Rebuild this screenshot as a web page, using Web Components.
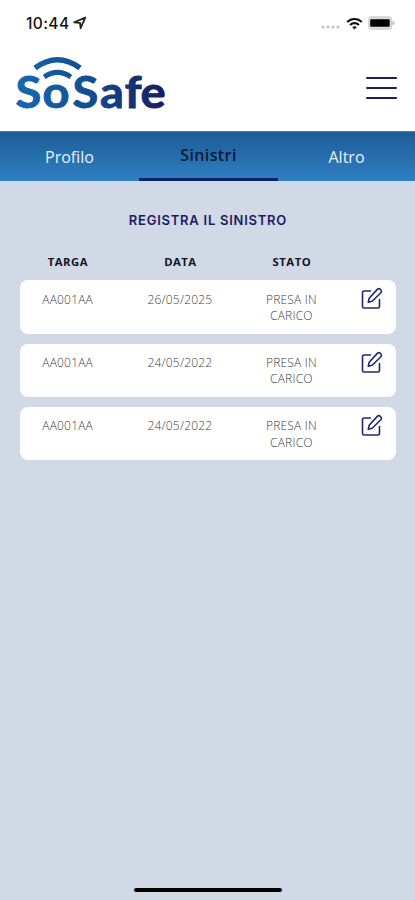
<!DOCTYPE html>
<html lang="it">
<head>
<meta charset="utf-8">
<meta name="viewport" content="width=device-width, initial-scale=1">
<title>SoSafe</title>
<style>
  :root {
    --navy: #1b1c63;
    --page: #d1d8e6;
    --ink: #111522;
  }
  body {
    margin: 0;
    background: var(--page);
    font-family: "Open Sans", "Noto Sans", sans-serif;
  }
</style>
</head>
<body>
<so-app>
  <so-status-bar slot="top" time="10:44"></so-status-bar>
  <so-header slot="top"></so-header>
  <so-tabs slot="top">
    <so-tab>Profilo</so-tab>
    <so-tab active>Sinistri</so-tab>
    <so-tab>Altro</so-tab>
  </so-tabs>
  <so-claims heading="REGISTRA IL SINISTRO">
    <so-claim targa="AA001AA" data="26/05/2025">PRESA IN CARICO</so-claim>
    <so-claim targa="AA001AA" data="24/05/2022">PRESA IN CARICO</so-claim>
    <so-claim targa="AA001AA" data="24/05/2022">PRESA IN CARICO</so-claim>
  </so-claims>
</so-app>

<script>
/* Shared base: renders template() into an open shadow root */
class SoElement extends HTMLElement {
  constructor() {
    super();
    this.attachShadow({ mode: 'open' });
  }

  connectedCallback() {
    this.shadowRoot.innerHTML = this.template();
  }
}

/* <so-app> — full-height column with the home indicator at the bottom */
class SoApp extends SoElement {
  template() {
    return `
      <style>
        :host {
          display: flex;
          flex-direction: column;
          height: 900px;
          overflow: hidden;
        }
        main { flex: 1; }
        .home {
          width: 148px;
          height: 4px;
          margin: 0 auto 8px;
          border-radius: 2px;
          background: #000;
        }
      </style>
      <slot name="top"></slot>
      <main><slot></slot></main>
      <div class="home"></div>
    `;
  }
}

/* <so-status-bar time="10:44"> */
class SoStatusBar extends SoElement {
  template() {
    return `
      <style>
        :host {
          display: flex;
          align-items: center;
          justify-content: space-between;
          box-sizing: border-box;
          height: 46px;
          padding: 0 20px 0 26px;
          background: #fff;
          color: #111;
        }
        .group { display: flex; align-items: center; }
        .time {
          padding-top: 1px;
          font: 500 15.5px/20px Inter, sans-serif;
          letter-spacing: 0.4px;
        }
        svg { display: block; }
        .arrow { margin-left: 4px; }
        .dots { margin: 8px 6px 0 0; }
        .battery { margin-left: 5px; }
      </style>
      <div class="group">
        <span class="time">${this.getAttribute('time')}</span>
        <svg class="arrow" width="14" height="14" viewBox="0 0 14 14">
          <path d="M1.2 6.3 12.3 1.5 7.6 12.2 7 6.9Z" fill="none" stroke="#222" stroke-width="1.8" stroke-linejoin="round"/>
        </svg>
      </div>
      <div class="group">
        <svg class="dots" width="19" height="4" viewBox="0 0 19 4" fill="#c4c4c4">
          <circle cx="2" cy="2" r="1.6"/><circle cx="7" cy="2" r="1.6"/>
          <circle cx="12" cy="2" r="1.6"/><circle cx="17" cy="2" r="1.6"/>
        </svg>
        <svg width="17" height="13" viewBox="0 0 17 13" fill="none" stroke="#111" stroke-width="2.1">
          <path d="M1.2 5C5.2.9 11.8.9 15.8 5"/>
          <path d="M4.1 7.9C6.5 5.5 10.5 5.5 12.9 7.9"/>
          <path d="M8.5 12.4 6.2 10.1Q8.5 8.2 10.8 10.1Z" fill="#111" stroke="none"/>
        </svg>
        <svg class="battery" width="27" height="14" viewBox="0 0 27 14">
          <rect x=".9" y=".9" width="22.4" height="12.2" rx="2.5" fill="#ddd" stroke="#cfcfcf" stroke-width="1.4"/>
          <rect x="2.2" y="3.2" width="19.5" height="7.6" rx="1" fill="#000"/>
          <path d="M24.5 4.5Q26.5 5.5 26.5 7T24.5 9.5Z" fill="#b5b5b5"/>
        </svg>
      </div>
    `;
  }
}

/* <so-header> — logo and menu button */
class SoHeader extends SoElement {
  template() {
    return `
      <style>
        :host {
          display: flex;
          justify-content: space-between;
          box-sizing: border-box;
          height: 85px;
          padding: 0 18px 0 6px;
          background: #fff;
        }
        svg { display: block; overflow: visible; }
        text { font: 700 43.5px Lato, sans-serif; }
        button {
          display: flex;
          flex-direction: column;
          align-self: flex-start;
          gap: 8px;
          margin-top: 31px;
          padding: 0;
          border: 0;
          background: none;
        }
        i {
          width: 31px;
          height: 2px;
          border-radius: 1px;
          background: var(--navy);
        }
      </style>
      <svg width="190" height="84" viewBox="6 46 190 84" role="img" aria-label="SoSafe">
        <defs>
          <linearGradient id="brand" gradientUnits="userSpaceOnUse" x1="16" y1="0" x2="158" y2="0">
            <stop offset="0" stop-color="#1668ae"/>
            <stop offset=".45" stop-color="#124f94"/>
            <stop offset="1" stop-color="#151a5c"/>
          </linearGradient>
        </defs>
        <g fill="none" stroke="url(#brand)">
          <path d="M35 68Q57.500 51.500 80 68" stroke-width="5.600"/>
          <path d="M44.200 77Q57.500 67.800 70.800 77" stroke-width="5"/>
        </g>
        <text transform="scale(1.08 1)" x="14.400 39.300 67.200 92.700 115.600 130" y="108" fill="url(#brand)" stroke="url(#brand)" stroke-width=".9">SoSafe</text>
      </svg>
      <button aria-label="Menu"><i></i><i></i><i></i></button>
    `;
  }
}

/* <so-tabs> — blue bar, equal-width <so-tab> children */
class SoTabs extends SoElement {
  template() {
    return `
      <style>
        :host {
          display: grid;
          grid-template-columns: 139px 139px 137px;
          box-sizing: border-box;
          height: 50px;
          border-top: 1px solid #477da6;
          background: linear-gradient(#1d5c98, #2f80c3);
        }
      </style>
      <slot></slot>
    `;
  }
}

class SoTab extends SoElement {
  template() {
    return `
      <style>
        :host {
          display: flex;
          align-items: center;
          justify-content: center;
          box-sizing: border-box;
          color: #e9f2fb;
          font-size: 16px;
        }
        :host([active]) {
          border-bottom: 3px solid #0b2268;
          color: #0c1a33;
          font-weight: 600;
          letter-spacing: 0.4px;
        }
      </style>
      <span><slot></slot></span>
    `;
  }
}

/* <so-claims heading="…"> — heading, column names, list of <so-claim> */
class SoClaims extends SoElement {
  template() {
    return `
      <style>
        :host { display: block; padding: 29px 19.5px 0 20.4px; }
        h1 {
          margin: 0;
          color: var(--navy);
          font: 600 13px/20px Inter, sans-serif;
          letter-spacing: 0.75px;
          text-align: center;
        }
        .names {
          display: grid;
          grid-template-columns: 95px 130px 93px 1fr;
          margin: 23px 0 10.3px;
          color: var(--ink);
          font-size: 11.3px;
          font-weight: 700;
          line-height: 17px;
          letter-spacing: 0.5px;
          text-align: center;
        }
        .list { display: flex; flex-direction: column; gap: 9.7px; }
      </style>
      <h1>${this.getAttribute('heading')}</h1>
      <div class="names"><span>TARGA</span><span>DATA</span><span>STATO</span></div>
      <div class="list"><slot></slot></div>
    `;
  }
}

/* <so-claim targa="…" data="…">status</so-claim> */
class SoClaim extends SoElement {
  template() {
    return `
      <style>
        :host {
          display: grid;
          grid-template-columns: 94.500px 130px 93px 1fr;
          box-sizing: border-box;
          height: 53.6px;
          padding-top: 11.5px;
          border-radius: 8px;
          background: #fff;
          color: #3c3c3c;
          font-size: 12px;
          font-weight: 300;
          line-height: 16.3px;
          letter-spacing: 0.2px;
          text-align: center;
        }
        .status { padding: 0 16px; }
        svg { display: block; margin: -4.5px 0 0 22px; }
      </style>
      <span>${this.getAttribute('targa')}</span>
      <span>${this.getAttribute('data')}</span>
      <span class="status"><slot></slot></span>
      <svg width="23" height="23" viewBox="0 0 23 23" fill="none" stroke="#25266b" stroke-width="1.6" stroke-linejoin="round" stroke-linecap="round">
        <path d="M10.5 4H4Q2.500 4 2.500 5.500V19.500Q2.500 21 4 21H18Q19.500 21 19.500 19.500V12.500"/>
        <path d="M17.300 2.400Q18.800.9 20.500 2.500T20.800 5.800L12.200 14.300 8.300 15.200 9.200 11.300Z"/>
      </svg>
    `;
  }
}

customElements.define('so-app', SoApp);
customElements.define('so-status-bar', SoStatusBar);
customElements.define('so-header', SoHeader);
customElements.define('so-tabs', SoTabs);
customElements.define('so-tab', SoTab);
customElements.define('so-claims', SoClaims);
customElements.define('so-claim', SoClaim);
</script>
</body>
</html>
